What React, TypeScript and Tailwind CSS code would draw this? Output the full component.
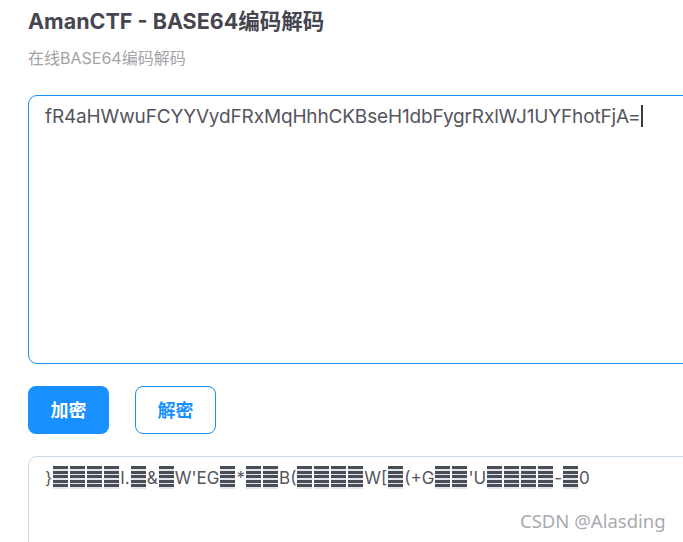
import React from 'react';

const input = 'fR4aHWwuFCYYVydFRxMqHhhCKBseH1dbFygrRxlWJ1UYFhotFjA=';

// '#' marks a glyph the font could not draw
const output = "}####I.#&#W'EG#*##B(####W[#(+G##'U####-#0";

const Missing: React.FC = () => (
  <span className="mx-px inline-block h-[23px] w-[15px] align-[-5px] bg-[repeating-linear-gradient(to_bottom,#4a4d56_0px,#4a4d56_3px,#e3e8ef_3px,#e3e8ef_4.6px)]" />
);

export default function App() {
  return (
    <div className="relative h-[542px] w-[683px] overflow-hidden bg-white pl-[28px] font-['Inter','Noto_Sans_CJK_SC',sans-serif]">
      {/* Header */}
      <h1 className="pt-[7px] text-[21.5px] font-bold leading-[28px] text-[#464650]">
        AmanCTF - BASE64编码解码
      </h1>
      <p className="mt-[13px] text-[16px] leading-[20px] text-[#a3a3a8]">在线BASE64编码解码</p>

      {/* Input */}
      <div className="mt-[27px] h-[269px] w-[700px] rounded-[9px] border border-[#1e8cf5] px-[16px] py-[8px]">
        <p className="text-[19px] leading-[26px] tracking-[-0.15px] text-[#55555e]">
          {input}
          <span className="ml-px inline-block h-[22px] w-[2px] align-[-4px] bg-[#3c3c44]" />
        </p>
      </div>

      {/* Actions */}
      <div className="mt-[22px] flex gap-[26px]">
        <button className="h-[48px] w-[81px] rounded-[8px] bg-[#1890ff] text-[18px] font-bold text-white">
          加密
        </button>
        <button className="h-[48px] w-[81px] rounded-[8px] border border-[#1e8cf5] bg-white text-[18px] font-bold text-[#1890ff]">
          解密
        </button>
      </div>

      {/* Output */}
      <div className="mt-[22px] h-[200px] w-[700px] rounded-[9px] border border-[#cbd9e6] px-[16px] py-[9px]">
        <p className="text-[17px] leading-[24px] text-[#55555e]">
          {output.split('').map((ch, i) => (ch === '#' ? <Missing key={i} /> : <span key={i}>{ch}</span>))}
        </p>
      </div>

      <span className="absolute left-[520px] top-[509px] font-['Noto_Sans',sans-serif] text-[18.5px] leading-[24px] text-[#a8aab0]">
        CSDN @Alasding
      </span>
    </div>
  );
}
